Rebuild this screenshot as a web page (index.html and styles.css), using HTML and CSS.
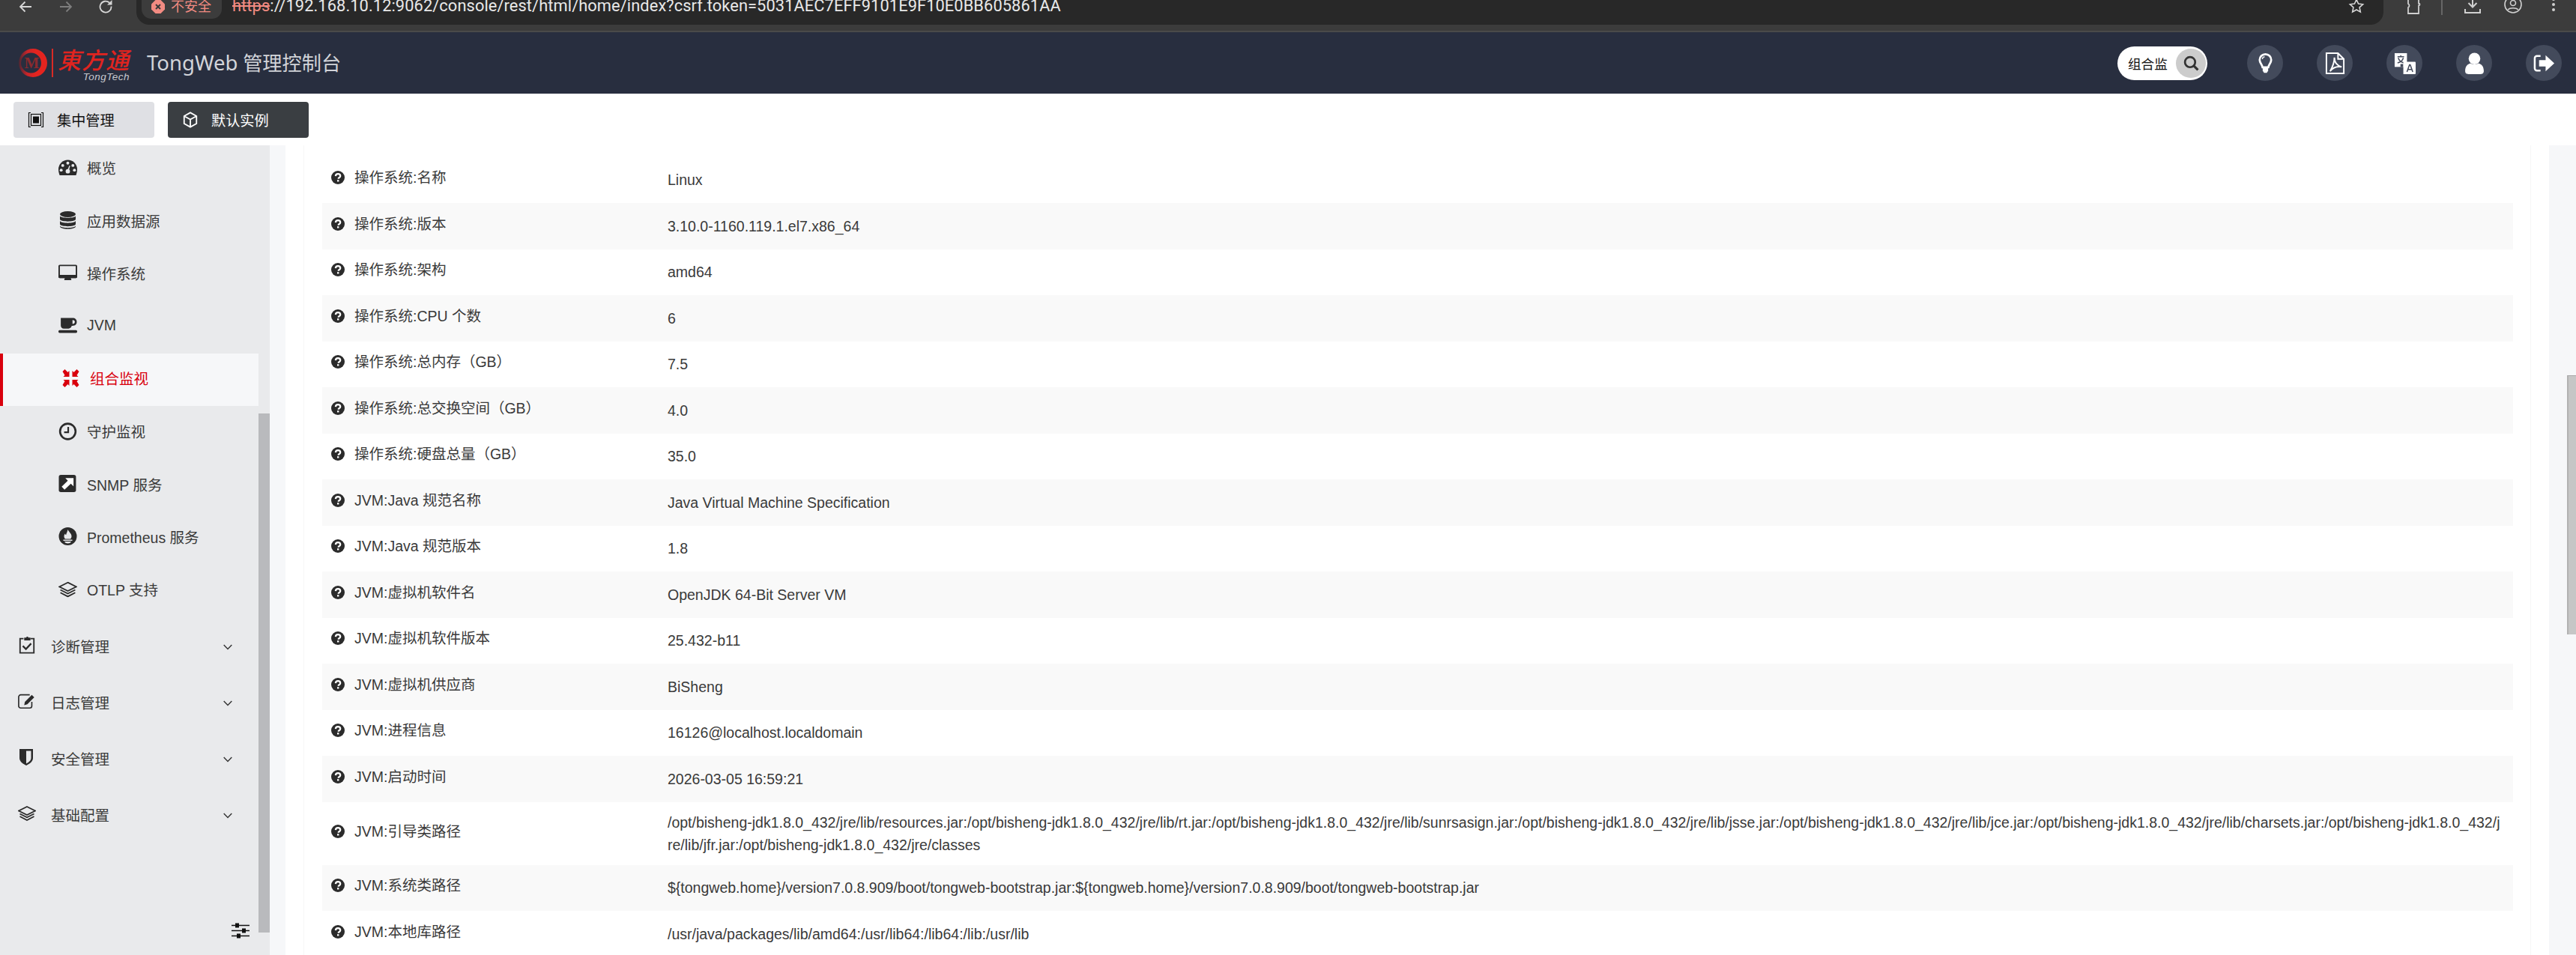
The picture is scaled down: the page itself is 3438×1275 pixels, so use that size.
FILE: index.html
```html
<!DOCTYPE html>
<html lang="zh-CN">
<head>
<meta charset="utf-8">
<title>TongWeb 管理控制台</title>
<link rel="stylesheet" href="styles.css">
</head>
<body>
<svg class="sprite" aria-hidden="true">
  <symbol id="i-q" viewBox="0 0 18 18">
    <circle cx="9" cy="9" r="9" fill="#2b2b2b"/>
    <path d="M5.900 7.100C6 5.200 7.300 4.200 9.100 4.200c1.800 0 3.100 1.100 3.100 2.700 0 1.300-.8 1.900-1.600 2.400-.7.5-.9.8-.9 1.500" fill="none" stroke="#fff" stroke-width="2.300"/>
    <rect x="8" y="12.200" width="2.400" height="2.300" fill="#fff"/>
  </symbol>
  <symbol id="i-chev" viewBox="0 0 12 8">
    <path d="M.7 1l5.300 5.400L11.300 1" fill="none" stroke="#333" stroke-width="1.400"/>
  </symbol>
  <symbol id="i-layers" viewBox="0 0 24 20">
    <path d="M12 1L23 6.500 12 12 1 6.500z M2.500 10.500L12 15.300 21.500 10.500 M2.500 14L12 19 21.500 14" fill="none" stroke="#2b2b2b" stroke-width="1.700"/>
  </symbol>
</svg>

<div class="browser">
  <svg class="b-ico b-back" viewBox="0 0 20 20"><path d="M18 9H3M9.500 2.500L3 9l6.500 6.500" fill="none" stroke="#d6d6d6" stroke-width="1.800"/></svg>
  <svg class="b-ico b-fwd" viewBox="0 0 20 20"><path d="M2 9h15M10.500 2.500L17 9l-6.500 6.500" fill="none" stroke="#7d7d7d" stroke-width="1.800"/></svg>
  <svg class="b-ico b-reload" viewBox="0 0 20 20"><path d="M16.500 8.500A7.500 7.500 0 1 1 14 3.500" fill="none" stroke="#d6d6d6" stroke-width="1.800"/><path d="M17.500 0v6.500H11z" fill="#d6d6d6"/></svg>
  <div class="omnibox">
    <div class="secure">
      <svg class="sec-ico" viewBox="0 0 18 18"><path d="M5.500 0h7L18 5.500v7L12.500 18h-7L0 12.500v-7z" fill="#f28b82"/><path d="M6 6l6 6M12 6l-6 6" stroke="#3a3a3a" stroke-width="2"/></svg>
      <span class="sec-text">不安全</span>
    </div>
    <div class="url"><span class="url-https">https</span>://192.168.10.12:9062/console/rest/html/home/index?csrf.token=5031AEC7EFF9101E9F10E0BB605861AA</div>
    <svg class="b-star" viewBox="0 0 20 20"><path d="M10 1.500l2.600 5.600 6 .7-4.500 4.100 1.200 6L10 15l-5.300 2.900 1.200-6L1.400 7.800l6-.7z" fill="none" stroke="#d6d6d6" stroke-width="1.600"/></svg>
  </div>
  <div class="b-tools">
    <svg class="b-ico" viewBox="0 0 24 24"><path d="M5 -2h14v8.500c2 0 2 3 0 3V20H5v-8c2-1 2-4 0-5z" fill="none" stroke="#d0d0d0" stroke-width="1.800"/></svg>
    <span class="b-sep"></span>
    <svg class="b-ico" viewBox="0 0 24 24"><path d="M12 -2v13M6.500 6L12 11.500 17.500 6" fill="none" stroke="#d0d0d0" stroke-width="2"/><path d="M2 14v5h20v-5" fill="none" stroke="#d0d0d0" stroke-width="2"/></svg>
    <svg class="b-ico" viewBox="0 0 24 24"><circle cx="12" cy="8" r="11" fill="none" stroke="#d0d0d0" stroke-width="1.600"/><circle cx="12" cy="6" r="3.500" fill="none" stroke="#d0d0d0" stroke-width="1.600"/><path d="M5 15c3-3 11-3 14 0" fill="none" stroke="#d0d0d0" stroke-width="1.600"/></svg>
    <svg class="b-ico" viewBox="0 0 24 24"><circle cx="12" cy="1" r="2" fill="#d0d0d0"/><circle cx="12" cy="8" r="2" fill="#d0d0d0"/><circle cx="12" cy="15" r="2" fill="#d0d0d0"/></svg>
  </div>
</div>

<header class="app-header">
  <div class="logo">
    <svg class="logo-mark" viewBox="0 0 40 40">
      <defs>
        <linearGradient id="logo-grad" x1="0" x2="1" y1="0" y2="0">
          <stop offset="0" stop-color="#4a2733"/>
          <stop offset="0.3" stop-color="#c9252a"/>
          <stop offset="0.6" stop-color="#e4241f"/>
        </linearGradient>
      </defs>
      <path fill-rule="evenodd" d="M20 1a19 19 0 1 0 0 38 19 19 0 0 0 0-38zM17.500 6.500a13.500 13.500 0 1 1 0 27 13.500 13.500 0 0 1 0-27z" fill="url(#logo-grad)"/>
      <text x="18.500" y="27" class="logo-m">M</text>
    </svg>
    <span class="logo-bar"></span>
    <div class="logo-words">
      <span class="logo-cn">東方通</span>
      <span class="logo-en">TongTech</span>
    </div>
  </div>
  <div class="app-title"><span class="title-en">TongWeb</span> 管理控制台</div>
  <div class="search">
    <span class="search-text">组合监</span>
    <span class="search-btn">
      <svg class="search-ico" viewBox="0 0 20 20"><circle cx="8.500" cy="8.500" r="6.500" fill="none" stroke="#333" stroke-width="2.600"/><path d="M13 13l5.500 5.500" stroke="#333" stroke-width="3"/></svg>
    </span>
  </div>
  <div class="round-icons">
    <span class="round"><svg class="round-ico" viewBox="0 0 24 32"><path d="M12 2.500a8.500 8.500 0 0 0-8.500 8.500c0 5 3.600 6 4.300 11h8.400c.7-5 4.300-6 4.300-11A8.500 8.500 0 0 0 12 2.500z" fill="none" stroke="#fff" stroke-width="3"/><path d="M8 23h8v4l-2 3h-4l-2-3z" fill="#fff"/><path d="M7.500 10c0-2 1.500-3.500 3.500-3.500" fill="none" stroke="#fff" stroke-width="1.600"/></svg></span>
    <span class="round"><svg class="round-ico" viewBox="0 0 26 30"><path d="M1 1h16l8 8v20H1z" fill="none" stroke="#fff" stroke-width="2"/><path d="M17 1v8h8" fill="none" stroke="#fff" stroke-width="2"/><path d="M12 7c0 6 3 11 10 13-6-1-12 1-16 6 3-5 6-12 6-19z" fill="none" stroke="#fff" stroke-width="2"/></svg></span>
    <span class="round"><svg class="round-ico" viewBox="0 0 30 30"><path d="M1 1h17v19H1z" fill="#fff"/><path d="M5 6h9M9.500 4v2M6 7.500c1 4 4 6 8 7M13 7.500c-1 4-4 6-8 7" fill="none" stroke="#434a5b" stroke-width="1.500"/><rect x="9" y="16" width="4" height="4" fill="#434a5b"/><path d="M13 13h16a1 1 0 0 1 1 1v15a1 1 0 0 1-1 1H13z" fill="#fff"/><path d="M18 27l3.500-10h1L26 27M19.500 23.500h5" fill="none" stroke="#434a5b" stroke-width="1.600"/></svg></span>
    <span class="round"><svg class="round-ico" viewBox="0 0 26 28"><circle cx="13" cy="8" r="7.500" fill="#fff"/><path d="M1 24c0-6 3-9 7-10 3 2 7 2 10 0 4 1 7 4 7 10 0 3-2 4-4 4H5c-2 0-4-1-4-4z" fill="#fff"/></svg></span>
    <span class="round"><svg class="round-ico" viewBox="0 0 30 24"><path d="M10 2H5a3 3 0 0 0-3 3v14a3 3 0 0 0 3 3h5" fill="none" stroke="#fff" stroke-width="2.600"/><path d="M8 7.500h9V1l12 11-12 11v-6.500H8z" fill="#fff"/></svg></span>
  </div>
</header>

<div class="toolbar">
  <button class="tab tab-light">
    <svg class="tab-ico" viewBox="0 0 22 22"><path d="M4 1.500H1.500v19H4M18 1.500h2.500v19H18" fill="none" stroke="#111" stroke-width="1.200"/><rect x="4.500" y="3.500" width="13" height="15" fill="none" stroke="#111" stroke-width="1.200"/><rect x="7" y="6.500" width="8" height="9" fill="#111"/></svg>
    集中管理
  </button>
  <button class="tab tab-dark">
    <svg class="tab-ico" viewBox="0 0 22 24"><path d="M11 1.500l9 5v11l-9 5-9-5v-11zM2 6.500l9 5 9-5M11 11.500v11" fill="none" stroke="#fff" stroke-width="2"/></svg>
    默认实例
  </button>
</div>

<div class="workspace">
  <aside class="sidebar">
    <nav class="side-nav">
      <a class="sub-item">
        <svg class="sub-ico" viewBox="0 0 24 20"><path d="M12 0a12 12 0 0 0-12 12c0 3 .6 5 1.500 7.500h21c.9-2.500 1.500-4.500 1.500-7.500A12 12 0 0 0 12 0z" fill="#2b2b2b"/><g fill="#e9eaec"><circle cx="12" cy="4" r="1.900"/><circle cx="5.500" cy="7" r="1.900"/><circle cx="18.500" cy="7" r="1.900"/><circle cx="3.500" cy="13" r="1.900"/><circle cx="20.500" cy="13" r="1.900"/><circle cx="12" cy="14.500" r="2.800"/><path d="M11 14l3-7 1 .5-2 7z"/></g></svg>
        概览
      </a>
      <a class="sub-item">
        <svg class="sub-ico" viewBox="0 0 22 24"><g fill="#2b2b2b"><ellipse cx="11" cy="4" rx="10.500" ry="4"/><path d="M.5 6.500C2 9.500 20 9.500 21.500 6.500V11C20 14.500 2 14.500 .5 11z"/><path d="M.5 13C2 16.500 20 16.500 21.500 13v4.500C20 21 2 21 .5 17.500z"/><path d="M.5 19.500C2 23 20 23 21.500 19.500V20c0 5-21 5-21 0z"/></g></svg>
        应用数据源
      </a>
      <a class="sub-item">
        <svg class="sub-ico" viewBox="0 0 26 22"><path d="M2 1h22a1 1 0 0 1 1 1v14.500a1 1 0 0 1-1 1H2a1 1 0 0 1-1-1V2a1 1 0 0 1 1-1z" fill="none" stroke="#2b2b2b" stroke-width="2"/><path d="M0 14h26v3a1.500 1.500 0 0 1-1.500 1.500h-23A1.500 1.500 0 0 1 0 17zM9 18h8l1 3.500H8z" fill="#2b2b2b"/></svg>
        操作系统
      </a>
      <a class="sub-item">
        <svg class="sub-ico" viewBox="0 0 24 20"><path d="M3 0h15c3.500 0 5.500 2 5.500 5s-2 5-5.500 5h-1c-.5 2-2 3.500-4 3.500H7c-2.500 0-4-1.500-4-4z" fill="#2b2b2b"/><path d="M18 2.500v5c2 0 3-1 3-2.500s-1-2.500-3-2.500z" fill="#e9eaec"/><rect x="0" y="15.500" width="24" height="3.500" rx="1.500" fill="#2b2b2b"/></svg>
        JVM
      </a>
      <a class="sub-item active">
        <svg class="sub-ico" viewBox="0 0 24 24"><g fill="#d9000d"><path d="M1 3l3-3 4 4 2-2v8H2l2-2zM23 3l-3-3-4 4-2-2v8h8l-2-2zM1 21l3 3 4-4 2 2v-8H2l2 2zM23 21l-3 3-4-4-2 2v-8h8l-2 2z"/></g></svg>
        组合监视
      </a>
      <a class="sub-item">
        <svg class="sub-ico" viewBox="0 0 22 22"><circle cx="11" cy="11" r="9.500" fill="none" stroke="#2b2b2b" stroke-width="2.400"/><path d="M11.500 5.500V12H6.500" fill="none" stroke="#2b2b2b" stroke-width="2"/></svg>
        守护监视
      </a>
      <a class="sub-item">
        <svg class="sub-ico" viewBox="0 0 22 22"><rect x="0" y="0" width="21" height="21" rx="2.500" fill="#2b2b2b"/><path d="M8 4h10v10l-3.300-3.300L7 18l-3.500-3.500 7.500-7.500z" fill="#fff"/></svg>
        SNMP 服务
      </a>
      <a class="sub-item">
        <svg class="sub-ico" viewBox="0 0 24 24"><circle cx="12" cy="12" r="12" fill="#2b2b2b"/><path d="M12 3c1 3 5 5 5 9 0 2-1 3-1.500 3.500h-7C8 15 7 14 7 12c0-2 1-3 1.500-3.500.2 1 .7 1.500 1.200 1.700C10 8 11.500 6 12 3z" fill="#e9eaec"/><path d="M6 16.500h12v1.500H6zM7.500 19h9c-1 1.800-2.500 2.500-4.500 2.500S8.500 20.800 7.500 19z" fill="#e9eaec"/></svg>
        Prometheus 服务
      </a>
      <a class="sub-item">
        <svg class="sub-ico" viewBox="0 0 24 20"><use href="#i-layers"/></svg>
        OTLP 支持
      </a>
      <a class="group">
        <svg class="group-ico" viewBox="0 0 24 26"><path d="M7 4H2v20.500h20V4h-5" fill="none" stroke="#2b2b2b" stroke-width="2"/><path d="M8 2.500h3c0-2 3-2 3 0h3v4H8z" fill="#2b2b2b"/><path d="M6 14.500l4.500 4.500L18 11" fill="none" stroke="#2b2b2b" stroke-width="2.500"/></svg>
        <span class="group-name">诊断管理</span>
        <svg class="chev"><use href="#i-chev"/></svg>
      </a>
      <a class="group">
        <svg class="group-ico" viewBox="0 0 26 22"><path d="M20 12v6a3 3 0 0 1-3 3H4a3 3 0 0 1-3-3V5a3 3 0 0 1 3-3h13" fill="none" stroke="#2b2b2b" stroke-width="1.800"/><path d="M10 12L20 2l3.500 3.500L13.500 15.500 9 17z" fill="#2b2b2b"/></svg>
        <span class="group-name">日志管理</span>
        <svg class="chev"><use href="#i-chev"/></svg>
      </a>
      <a class="group">
        <svg class="group-ico" viewBox="0 0 24 24"><path d="M2 1h18v12c0 5-5 8-9 10-4-2-9-5-9-10z" fill="#2b2b2b"/><path d="M11 3.500h6.500V13c0 3.500-3.500 5.800-6.500 7.500z" fill="#e9eaec"/></svg>
        <span class="group-name">安全管理</span>
        <svg class="chev"><use href="#i-chev"/></svg>
      </a>
      <a class="group">
        <svg class="group-ico" viewBox="0 0 24 20"><use href="#i-layers"/></svg>
        <span class="group-name">基础配置</span>
        <svg class="chev"><use href="#i-chev"/></svg>
      </a>
    </nav>
    <svg class="side-settings" viewBox="0 0 24 21"><g stroke="#111" stroke-width="1.500"><path d="M0 3.500h24M0 10.500h24M0 17.500h24"/></g><g fill="#111"><rect x="5" y="0.500" width="5" height="6"/><rect x="14" y="7.500" width="5" height="6"/><rect x="7" y="14.500" width="5" height="6"/></g></svg>
    <div class="side-track"><div class="side-thumb"></div></div>
  </aside>
  <div class="gutter"></div>
  <main class="main">
    <div class="panel">
      <div class="row"><div class="key"><svg class="q"><use href="#i-q"/></svg><span>操作系统:名称</span></div><div class="val">Linux</div></div>
      <div class="row"><div class="key"><svg class="q"><use href="#i-q"/></svg><span>操作系统:版本</span></div><div class="val">3.10.0-1160.119.1.el7.x86_64</div></div>
      <div class="row"><div class="key"><svg class="q"><use href="#i-q"/></svg><span>操作系统:架构</span></div><div class="val">amd64</div></div>
      <div class="row"><div class="key"><svg class="q"><use href="#i-q"/></svg><span>操作系统:CPU 个数</span></div><div class="val">6</div></div>
      <div class="row"><div class="key"><svg class="q"><use href="#i-q"/></svg><span>操作系统:总内存（GB）</span></div><div class="val">7.5</div></div>
      <div class="row"><div class="key"><svg class="q"><use href="#i-q"/></svg><span>操作系统:总交换空间（GB）</span></div><div class="val">4.0</div></div>
      <div class="row"><div class="key"><svg class="q"><use href="#i-q"/></svg><span>操作系统:硬盘总量（GB）</span></div><div class="val">35.0</div></div>
      <div class="row"><div class="key"><svg class="q"><use href="#i-q"/></svg><span>JVM:Java 规范名称</span></div><div class="val">Java Virtual Machine Specification</div></div>
      <div class="row"><div class="key"><svg class="q"><use href="#i-q"/></svg><span>JVM:Java 规范版本</span></div><div class="val">1.8</div></div>
      <div class="row"><div class="key"><svg class="q"><use href="#i-q"/></svg><span>JVM:虚拟机软件名</span></div><div class="val">OpenJDK 64-Bit Server VM</div></div>
      <div class="row"><div class="key"><svg class="q"><use href="#i-q"/></svg><span>JVM:虚拟机软件版本</span></div><div class="val">25.432-b11</div></div>
      <div class="row"><div class="key"><svg class="q"><use href="#i-q"/></svg><span>JVM:虚拟机供应商</span></div><div class="val">BiSheng</div></div>
      <div class="row"><div class="key"><svg class="q"><use href="#i-q"/></svg><span>JVM:进程信息</span></div><div class="val">16126@localhost.localdomain</div></div>
      <div class="row"><div class="key"><svg class="q"><use href="#i-q"/></svg><span>JVM:启动时间</span></div><div class="val">2026-03-05 16:59:21</div></div>
      <div class="row"><div class="key"><svg class="q"><use href="#i-q"/></svg><span>JVM:引导类路径</span></div><div class="val">/opt/bisheng-jdk1.8.0_432/jre/lib/resources.jar:/opt/bisheng-jdk1.8.0_432/jre/lib/rt.jar:/opt/bisheng-jdk1.8.0_432/jre/lib/sunrsasign.jar:/opt/bisheng-jdk1.8.0_432/jre/lib/jsse.jar:/opt/bisheng-jdk1.8.0_432/jre/lib/jce.jar:/opt/bisheng-jdk1.8.0_432/jre/lib/charsets.jar:/opt/bisheng-jdk1.8.0_432/jre/lib/jfr.jar:/opt/bisheng-jdk1.8.0_432/jre/classes</div></div>
      <div class="row"><div class="key"><svg class="q"><use href="#i-q"/></svg><span>JVM:系统类路径</span></div><div class="val">${tongweb.home}/version7.0.8.909/boot/tongweb-bootstrap.jar:${tongweb.home}/version7.0.8.909/boot/tongweb-bootstrap.jar</div></div>
      <div class="row"><div class="key"><svg class="q"><use href="#i-q"/></svg><span>JVM:本地库路径</span></div><div class="val">/usr/java/packages/lib/amd64:/usr/lib64:/lib64:/lib:/usr/lib</div></div>
    </div>
  </main>
  <div class="page-scroll"><div class="page-thumb"></div></div>
</div>
</body>
</html>
```

FILE: styles.css
```css
* { box-sizing: border-box; }
html, body { margin: 0; height: 100%; overflow: hidden; }
body {
  display: flex;
  flex-direction: column;
  height: 1275px;
  background: #fff;
  color: #3a3a3a;
  font-family: "Liberation Sans", "Noto Sans CJK SC", sans-serif;
  font-size: 19.5px;
}
.sprite { display: none; }

/* browser chrome */
.browser {
  flex: none;
  height: 43px;
  display: flex;
  align-items: flex-start;
  background: #3c3c3c;
  border-bottom: 2px solid #4a4a4a;
  padding-left: 24px;
  overflow: hidden;
}
.b-ico { flex: none; width: 20px; height: 20px; }
.b-fwd { margin-left: 34px; }
.b-reload { margin-left: 34px; }
.omnibox {
  flex: none;
  width: 2999px;
  height: 33px;
  margin-left: 30px;
  display: flex;
  align-items: flex-start;
  background: #282828;
  border-radius: 0 0 17px 17px;
  padding-left: 7px;
}
.secure {
  flex: none;
  width: 107px;
  height: 25px;
  background: #3c3c3c;
  border-radius: 0 0 13px 13px;
  display: flex;
  align-items: flex-start;
  padding-left: 13px;
  gap: 8px;
  color: #f28b82;
}
.sec-ico { flex: none; width: 18px; height: 18px; }
.sec-text { font-size: 18px; line-height: 18px; }
.url {
  flex: none;
  width: 2800px;
  margin-left: 14px;
  color: #e8e8e8;
  font-family: "Roboto", sans-serif;
  font-size: 21.800px;
  line-height: 16px;
  white-space: nowrap;
  letter-spacing: 0.1px;
}
.url-https { color: #f28b82; text-decoration: line-through; }
.b-star { flex: none; width: 22px; height: 20px; margin-left: 24px; margin-top: -2px; }
.b-tools {
  flex: none;
  display: flex;
  align-items: flex-start;
  margin-left: 28px;
  gap: 30px;
}
.b-tools .b-ico { width: 24px; height: 24px; margin-top: -2px; }
.b-sep { width: 2px; height: 20px; background: #666; margin: 0 -2px 0 -5px; }

/* app header */
.app-header {
  flex: none;
  height: 82px;
  background: #282e3f;
  display: flex;
  align-items: center;
  padding-left: 24px;
  padding-right: 19px;
}
.logo { flex: none; display: flex; align-items: center; width: 149px; height: 46px; }
.logo-mark { flex: none; width: 40px; height: 40px; }
.logo-m { font-family: "Liberation Serif", serif; font-size: 21px; font-weight: 700; fill: #8a2a2e; text-anchor: middle; }
.logo-bar { flex: none; width: 2px; height: 38px; background: #d92a25; margin-left: 5px; }
.logo-words { display: flex; flex-direction: column; align-items: flex-end; margin-left: 5px; width: 97px; }
.logo-cn {
  color: #e0241f;
  font-family: "Noto Sans CJK TC", sans-serif;
  font-size: 31px;
  line-height: 36px;
  font-style: italic;
  font-weight: 500;
  letter-spacing: 1px;
  white-space: nowrap;
}
.logo-en {
  color: #c8cad0;
  font-size: 13.500px;
  line-height: 11px;
  font-style: italic;
  font-family: "Liberation Sans", sans-serif;
  letter-spacing: 0.5px;
}
.app-title {
  flex: 1;
  margin-left: 23px;
  color: #d2d4d9;
  font-family: "Noto Sans", "Noto Sans CJK SC", sans-serif;
  font-size: 26.200px;
  line-height: 40px;
  white-space: nowrap;
}
.title-en { font-size: 27.500px; }
.search {
  flex: none;
  width: 120px;
  height: 45px;
  margin-right: 53px;
  background: #fff;
  border-radius: 23px;
  display: flex;
  align-items: center;
  padding-left: 14px;
  color: #111;
  font-size: 17.600px;
}
.search-text { flex: 1; white-space: nowrap; }
.search-btn {
  flex: none;
  width: 40px;
  height: 39px;
  margin-right: 2px;
  border-radius: 50%;
  background: #cccccc;
  display: flex;
  align-items: center;
  justify-content: center;
}
.search-ico { width: 21px; height: 21px; }
.round-icons { flex: none; display: flex; gap: 45px; }
.round {
  width: 48px;
  height: 48px;
  border-radius: 50%;
  background: #434a5b;
  display: flex;
  align-items: center;
  justify-content: center;
}
.round-ico { width: 29px; height: 29px; }

/* toolbar */
.toolbar {
  flex: none;
  height: 69px;
  display: flex;
  align-items: flex-start;
  gap: 18px;
  padding: 11px 0 0 18px;
  background: #fff;
}
.tab {
  width: 188px;
  height: 48px;
  display: flex;
  align-items: center;
  padding: 0 0 0 19px;
  gap: 17px;
  border: 0;
  border-radius: 4px;
  font-family: inherit;
  font-size: 19.200px;
}
.tab-light { background: #dfe0e4; color: #111; }
.tab-dark { background: #3a3e42; color: #fff; }
.tab-ico { flex: none; width: 22px; height: 22px; }

/* workspace */
.workspace { flex: 1; min-height: 0; display: flex; }
.sidebar {
  position: relative;
  flex: none;
  width: 360px;
  background: #e9eaec;
  overflow: hidden;
}
.side-nav { width: 345px; margin-top: -4px; }
.sub-item {
  height: 70.400px;
  display: flex;
  align-items: center;
  padding: 0 0 3px 78px;
  gap: 13px;
  white-space: nowrap;
}
.sub-ico { flex: none; width: 25px; height: 24px; }
.sub-item.active {
  background: #f6f7f9;
  color: #d9000d;
  border-left: 4px solid #d9000d;
  padding-left: 78px;
  padding-bottom: 4px;
}
.group {
  height: 75px;
  display: flex;
  align-items: center;
  padding: 3px 0 0 24px;
}
.group-ico { flex: none; width: 24px; height: 24px; margin-top: -4px; }
.group-name { flex: none; width: 230px; margin-left: 20px; }
.chev { flex: none; width: 12px; height: 8px; margin-top: 3px; }
.side-settings { position: absolute; left: 309px; top: 1038px; width: 24px; height: 21px; }
.side-track { position: absolute; left: 345px; top: 0; bottom: 0; width: 15px; padding-top: 358px; }
.side-thumb { height: 693px; background: #b9babd; }

.gutter { flex: none; width: 21px; background: #f6f7f9; }
.main { flex: 1; min-width: 0; background: #fff; padding: 0 24px; overflow: hidden; }
.panel {
  height: 100%;
  border-left: 1px solid #f7f7f7;
  border-right: 1px solid #f7f7f7;
  padding: 15.500px 23px 0 24px;
}
.row {
  display: flex;
  align-items: center;
  min-height: 61.500px;
}
.row:nth-child(even) { background: #f9f9f9; }
.key {
  flex: none;
  width: 461px;
  display: flex;
  align-items: center;
  padding: 0 0 6px 12px;
  gap: 13px;
  line-height: 28px;
}
.q { flex: none; width: 18px; height: 18px; }
.val {
  flex: 1;
  min-width: 0;
  padding: 12px 14px 12px 0;
  line-height: 30px;
  word-break: break-all;
}

/* page scrollbar */
.page-scroll { flex: none; width: 36px; padding: 307px 0 0 24px; background: #f6f7f9; }
.page-thumb { width: 12px; height: 346px; background: #c6c6c6; border-left: 2px solid #b2b2b2; border-top: 1px solid #a8a8a8; }
```
